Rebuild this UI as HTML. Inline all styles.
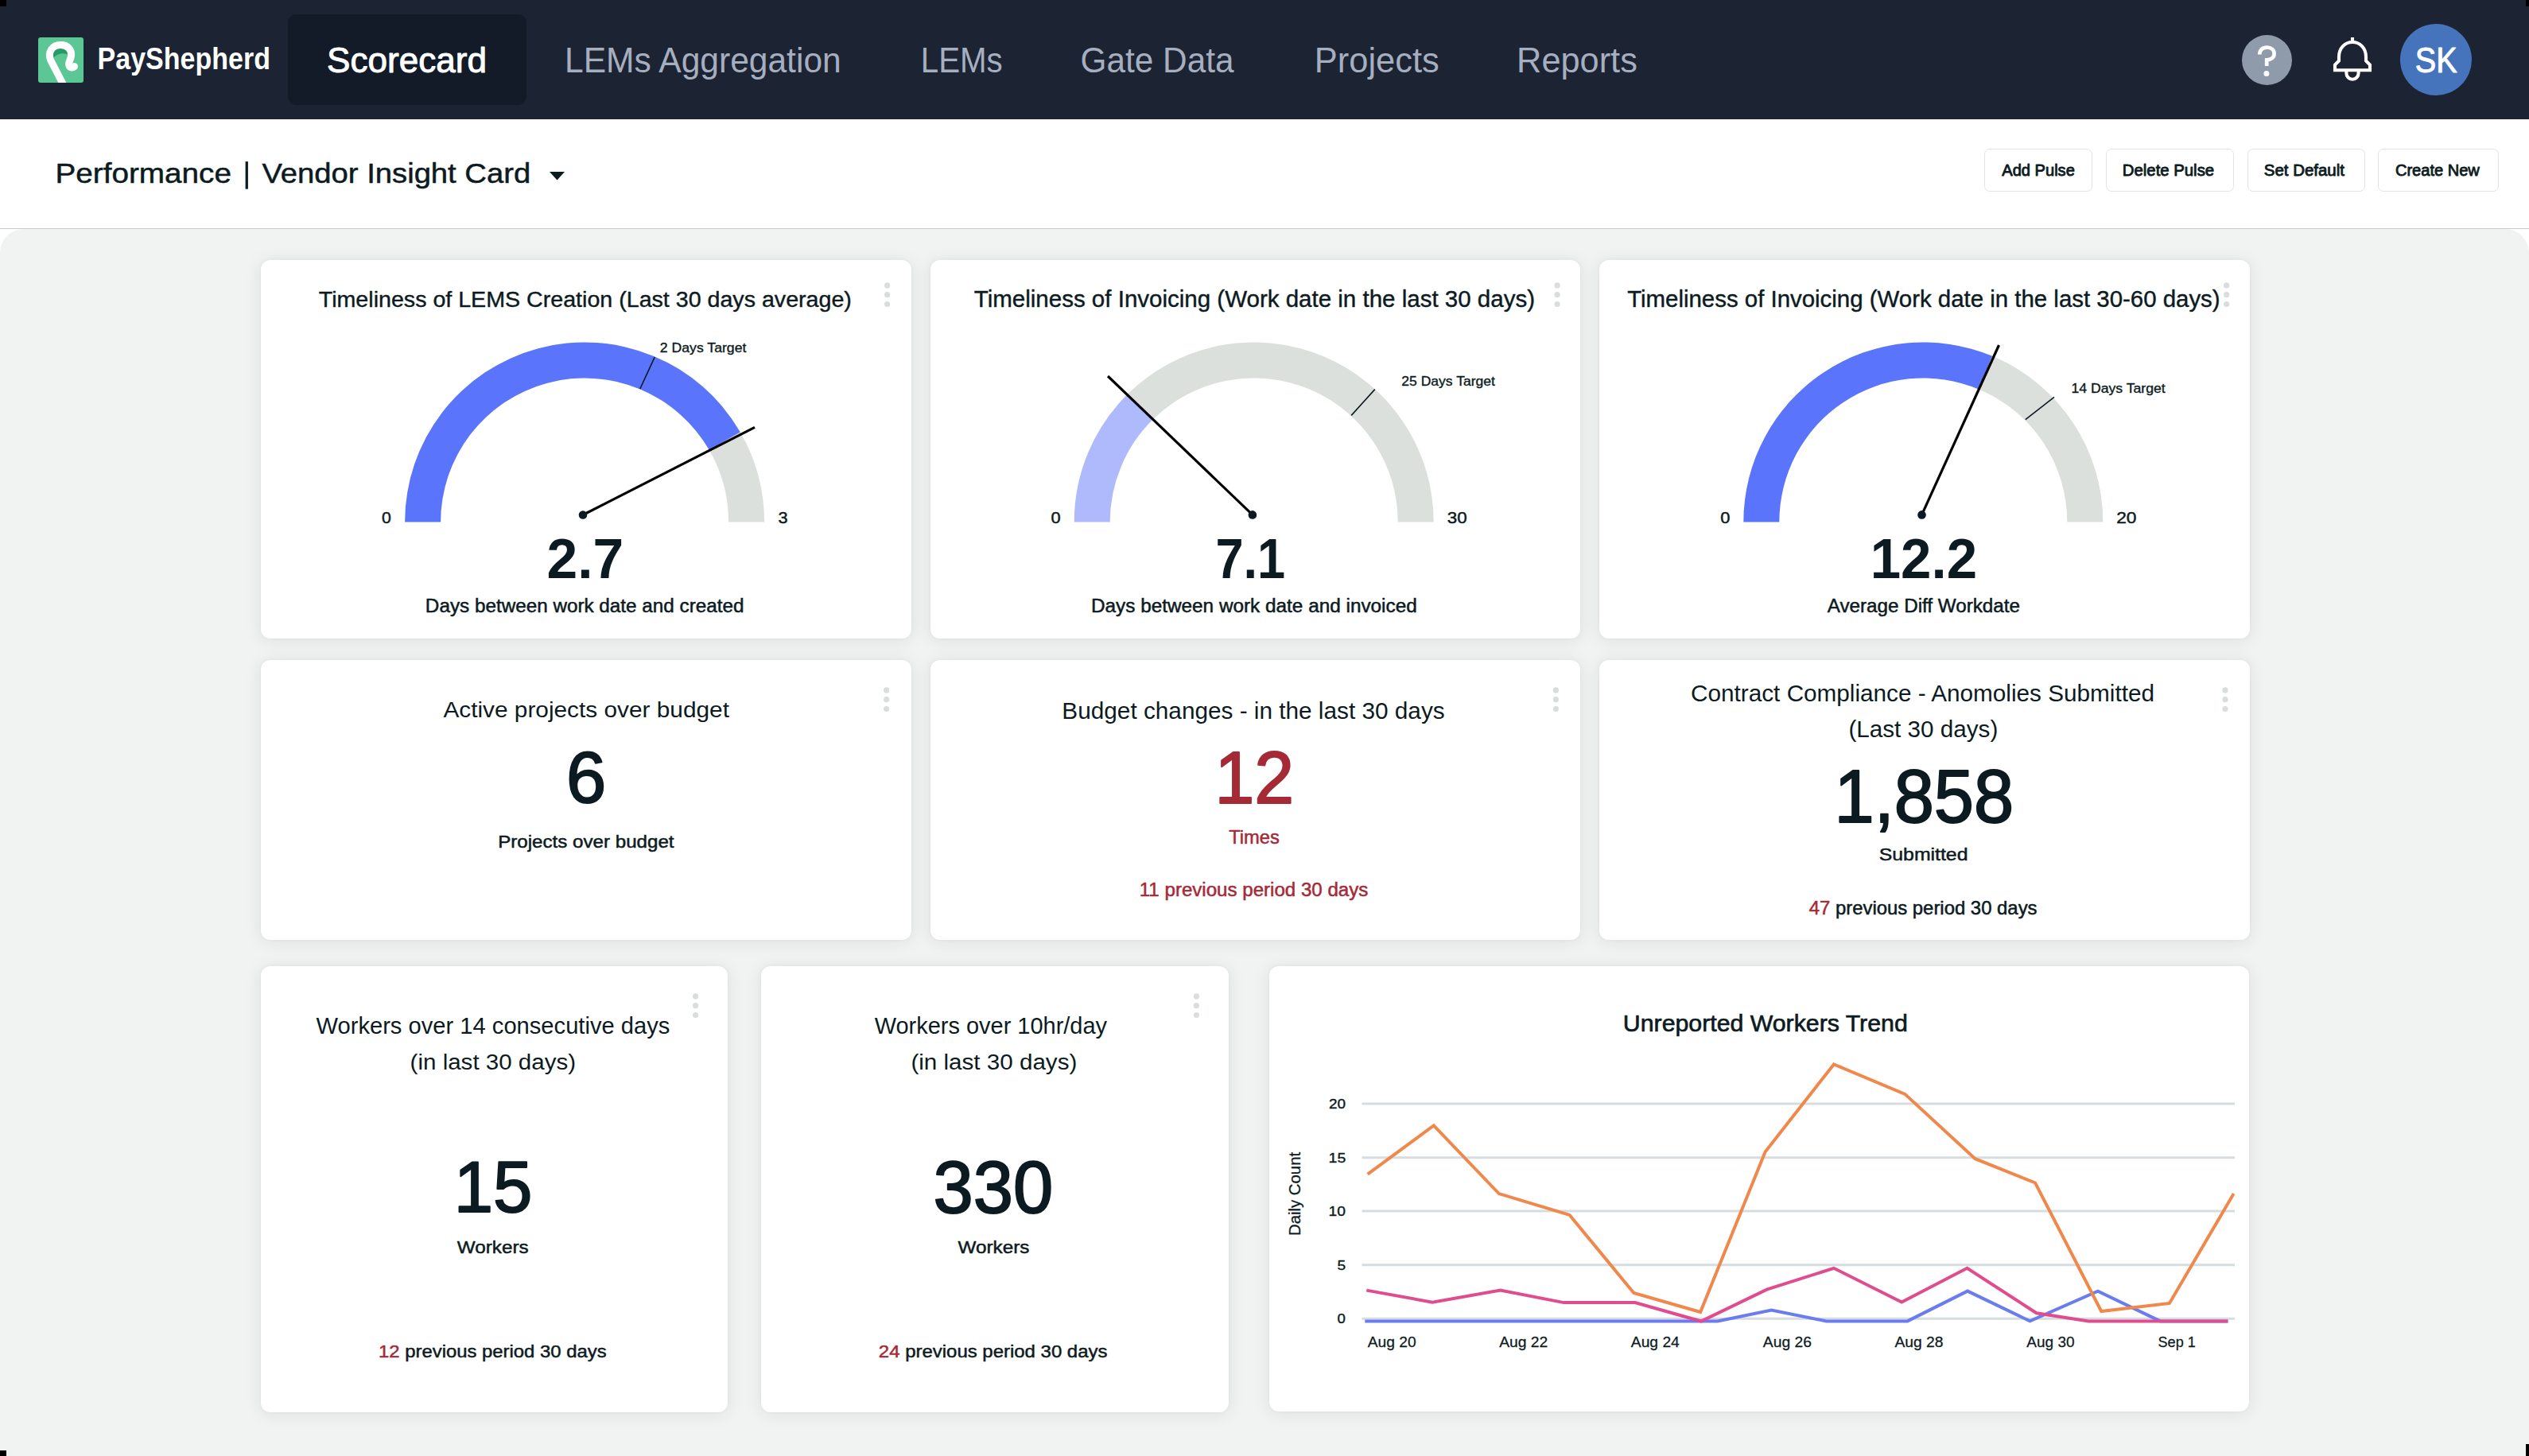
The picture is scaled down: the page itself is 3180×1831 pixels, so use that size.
<!DOCTYPE html>
<html lang="en">
<head>
<meta charset="utf-8">
<title>PayShepherd - Scorecard</title>
<style>
  html, body { margin: 0; padding: 0; }
  body { width: 3180px; height: 1831px; overflow: hidden; position: relative; background: #ffffff;
         font-family: "Liberation Sans", sans-serif; }
  .abs { position: absolute; }
  .nav { left: 0; top: 0; width: 3180px; height: 150px; background: #1c2333; }
  .tab-active { left: 362px; top: 18px; width: 300px; height: 114px; border-radius: 11px; background: #131a28; }
  .logo { left: 48px; top: 47px; width: 57px; height: 57px; border-radius: 3px; background: #5ac794; overflow: hidden; }
  .help { left: 2818.5px; top: 44px; width: 63px; height: 63px; border-radius: 50%; background: #8f9aab; }
  .avatar { left: 3018px; top: 30px; width: 90px; height: 90px; border-radius: 50%; background: #4574bd; }
  .header { left: 0; top: 150px; width: 3180px; height: 137px; background: #ffffff; }
  .hline { left: 0; top: 287px; width: 3180px; height: 1px; background: #c9cecd; }
  .main { left: 0; top: 288px; width: 3180px; height: 1543px; background: #f1f3f2; border-radius: 30px 30px 0 0; }
  .btn { top: 187px; height: 54px; box-sizing: border-box; border: 1.5px solid #e2e4e4; border-radius: 7px; background: #fff; }
  .card { background: #ffffff; border-radius: 12px; box-shadow: 0 2px 22px rgba(20, 30, 30, 0.085), 0 0 5px rgba(20,30,30,0.045); }
  .corner { background: #000; width: 8px; height: 8px; }
  svg.overlay { position: absolute; left: 0; top: 0; }
</style>
</head>
<body>
  <div class="abs main"></div>
  <div class="abs header"></div>
  <div class="abs hline"></div>
  <div class="abs nav"></div>
  <div class="abs tab-active"></div>
  <div class="abs logo">
    <svg width="57" height="57" viewBox="48 47 57 57">
      <path d="M65.5 75 C65.5 62 71.5 59.5 76.5 59.5 C82 59.5 86.5 63 86.5 69.5 C82 66 71.5 66 65.5 75 Z" fill="#289a69"/>
      <path d="M79.4 106 L63.6 75.5 C59.6 65 66 56.6 76.4 56.6 C85.6 56.6 90 63 89.6 69.5 C89.2 75 86.2 77.5 86.6 81 C87 85.2 90.6 86.2 93.6 83.6" fill="none" stroke="#ffffff" stroke-width="9" stroke-linecap="round"/>
    </svg>
  </div>
  <div class="abs help"></div>
  <div class="abs avatar"></div>

  <div class="abs btn" style="left:2495px;width:136px;"></div>
  <div class="abs btn" style="left:2648px;width:161px;"></div>
  <div class="abs btn" style="left:2825.5px;width:148px;"></div>
  <div class="abs btn" style="left:2990px;width:152px;"></div>

  <div class="abs card" style="left:328px;top:327px;width:818px;height:476px;"></div>
  <div class="abs card" style="left:1170px;top:327px;width:817px;height:476px;"></div>
  <div class="abs card" style="left:2011px;top:327px;width:818px;height:476px;"></div>
  <div class="abs card" style="left:328px;top:830px;width:818px;height:352px;"></div>
  <div class="abs card" style="left:1170px;top:830px;width:817px;height:352px;"></div>
  <div class="abs card" style="left:2011px;top:830px;width:818px;height:352px;"></div>
  <div class="abs card" style="left:327.5px;top:1215px;width:587.5px;height:561px;"></div>
  <div class="abs card" style="left:957px;top:1215px;width:588px;height:561px;"></div>
  <div class="abs card" style="left:1596px;top:1215px;width:1232px;height:560px;"></div>

  <svg class="overlay" width="3180" height="1831" viewBox="0 0 3180 1831" font-family="Liberation Sans, sans-serif">
    <!-- help icon -->
    <path d="M2841.3 68.6 C2841.3 62.6 2845.3 59.6 2850.5 59.6 C2855.7 59.6 2859.6 62.8 2859.6 67.5 C2859.6 72.5 2855.5 75.3 2850.2 75.3 L2850.2 83" fill="none" stroke="#ffffff" stroke-width="4.7" stroke-linecap="butt" stroke-linejoin="miter"/>
    <circle cx="2849.9" cy="92.4" r="3.5" fill="#ffffff"/>
    <!-- bell icon -->
    <g fill="none" stroke="#ffffff" stroke-width="4.1" stroke-linejoin="miter">
      <line x1="2958" y1="47" x2="2958" y2="53"/>
      <path d="M2941 76.5 L2941 71.5 C2941 60.5 2948.5 53 2958 53 C2967.5 53 2975 60.5 2975 71.5 L2975 76.5 L2980 81.5 L2980 88.2 L2936 88.2 L2936 81.5 Z"/>
      <path d="M2950.4 88.2 L2950.4 92.2 A7.6 7.6 0 0 0 2965.6 92.2 L2965.6 88.2"/>
    </g>
    <!-- dropdown triangle -->
    <path d="M691 216 L710 216 L700.5 226.5 Z" fill="#0c1a21"/>
    <rect x="308.6" y="203.1" width="3.3" height="34.6" fill="#0c1a21"/>
<path d="M509.10 656.50 A226.00 226.00 0 0 1 930.82 543.50 L891.85 566.00 A181.00 181.00 0 0 0 554.10 656.50 Z" fill="#5a74fc"/>
<path d="M930.82 543.50 A226.00 226.00 0 0 1 961.10 656.50 L916.10 656.50 A181.00 181.00 0 0 0 891.85 566.00 Z" fill="#dbe0dd"/>
<line x1="804.80" y1="489.00" x2="823.20" y2="449.20" stroke="#0c1a21" stroke-width="1.6"/>
<line x1="733.00" y1="647.50" x2="949.00" y2="537.40" stroke="#000" stroke-width="3.2" stroke-linecap="butt"/>
<circle cx="733.00" cy="647.50" r="5.3" fill="#0c1a21"/>
<path d="M1350.70 656.50 A226.00 226.00 0 0 1 1418.01 495.58 L1449.61 527.62 A181.00 181.00 0 0 0 1395.70 656.50 Z" fill="#afbafd"/>
<path d="M1418.01 495.58 A226.00 226.00 0 0 1 1802.70 656.50 L1757.70 656.50 A181.00 181.00 0 0 0 1449.61 527.62 Z" fill="#dbe0dd"/>
<line x1="1699.20" y1="522.40" x2="1728.80" y2="489.60" stroke="#0c1a21" stroke-width="1.6"/>
<line x1="1574.90" y1="647.40" x2="1393.00" y2="473.00" stroke="#000" stroke-width="3.2" stroke-linecap="butt"/>
<circle cx="1574.90" cy="647.40" r="5.3" fill="#0c1a21"/>
<path d="M2192.30 656.50 A226.00 226.00 0 0 1 2505.15 447.85 L2487.86 489.40 A181.00 181.00 0 0 0 2237.30 656.50 Z" fill="#5a74fc"/>
<path d="M2505.15 447.85 A226.00 226.00 0 0 1 2644.30 656.50 L2599.30 656.50 A181.00 181.00 0 0 0 2487.86 489.40 Z" fill="#dbe0dd"/>
<line x1="2546.80" y1="527.70" x2="2583.00" y2="499.40" stroke="#0c1a21" stroke-width="1.6"/>
<line x1="2416.50" y1="647.40" x2="2513.50" y2="434.00" stroke="#000" stroke-width="3.2" stroke-linecap="butt"/>
<circle cx="2416.50" cy="647.40" r="5.3" fill="#0c1a21"/>
<line x1="1712.5" y1="1388.0" x2="2810" y2="1388.0" stroke="#d6dde0" stroke-width="3"/>
<line x1="1712.5" y1="1455.8" x2="2810" y2="1455.8" stroke="#d6dde0" stroke-width="3"/>
<line x1="1712.5" y1="1523.0" x2="2810" y2="1523.0" stroke="#d6dde0" stroke-width="3"/>
<line x1="1712.5" y1="1590.8" x2="2810" y2="1590.8" stroke="#d6dde0" stroke-width="3"/>
<line x1="1712.5" y1="1658.3" x2="2810" y2="1658.3" stroke="#d6dde0" stroke-width="3"/>
<polyline fill="none" stroke="#6a7cf0" stroke-width="4" stroke-linejoin="miter" points="1716.3,1661.5 2159.7,1661.5 2227.4,1647.6 2296.6,1661.4 2398.5,1661.4 2474.0,1623.6 2552.5,1661.4 2637.9,1623.6 2716.3,1661.4 2801.4,1661.4"/>
<polyline fill="none" stroke="#e04c8e" stroke-width="4" stroke-linejoin="miter" points="1718.3,1622.6 1801.1,1637.6 1886.5,1622.6 1966.4,1638.1 2055.9,1638.1 2139.0,1661.5 2221.6,1621.6 2305.9,1594.8 2391.2,1637.5 2473.5,1594.8 2560.6,1651.3 2626.3,1661.4 2719.0,1661.4 2801.4,1661.4"/>
<polyline fill="none" stroke="#f0884c" stroke-width="4" stroke-linejoin="miter" points="1719.7,1476.6 1802.8,1415.4 1884.8,1501.1 1973.6,1527.9 2054.4,1626.0 2138.1,1650.0 2219.6,1448.6 2305.9,1338.4 2395.3,1375.9 2483.6,1457.2 2559.1,1487.5 2642.2,1649.0 2727.9,1638.9 2808.7,1501.0"/>
<circle cx="1115.6" cy="358.9" r="3.6" fill="#dadddd"/>
<circle cx="1115.6" cy="370.7" r="3.6" fill="#dadddd"/>
<circle cx="1115.6" cy="382.5" r="3.6" fill="#dadddd"/>
<circle cx="1958.1" cy="358.9" r="3.6" fill="#dadddd"/>
<circle cx="1958.1" cy="370.7" r="3.6" fill="#dadddd"/>
<circle cx="1958.1" cy="382.5" r="3.6" fill="#dadddd"/>
<circle cx="2799.6" cy="358.9" r="3.6" fill="#dadddd"/>
<circle cx="2799.6" cy="370.7" r="3.6" fill="#dadddd"/>
<circle cx="2799.6" cy="382.5" r="3.6" fill="#dadddd"/>
<circle cx="1114.6" cy="867.9" r="3.6" fill="#dadddd"/>
<circle cx="1114.6" cy="879.7" r="3.6" fill="#dadddd"/>
<circle cx="1114.6" cy="891.5" r="3.6" fill="#dadddd"/>
<circle cx="1956.4" cy="867.9" r="3.6" fill="#dadddd"/>
<circle cx="1956.4" cy="879.7" r="3.6" fill="#dadddd"/>
<circle cx="1956.4" cy="891.5" r="3.6" fill="#dadddd"/>
<circle cx="2798.0" cy="867.9" r="3.6" fill="#dadddd"/>
<circle cx="2798.0" cy="879.7" r="3.6" fill="#dadddd"/>
<circle cx="2798.0" cy="891.5" r="3.6" fill="#dadddd"/>
<circle cx="874.6" cy="1252.9" r="3.6" fill="#dadddd"/>
<circle cx="874.6" cy="1264.7" r="3.6" fill="#dadddd"/>
<circle cx="874.6" cy="1276.5" r="3.6" fill="#dadddd"/>
<circle cx="1504.4" cy="1252.9" r="3.6" fill="#dadddd"/>
<circle cx="1504.4" cy="1264.7" r="3.6" fill="#dadddd"/>
<circle cx="1504.4" cy="1276.5" r="3.6" fill="#dadddd"/>
<text transform="translate(122.57 87.30) scale(0.8635 1)" font-size="39.40" font-weight="700" fill="#ffffff">PayShepherd</text>
<text transform="translate(411.11 91.10) scale(1.0056 1)" font-size="43.83" font-weight="400" fill="#ffffff" stroke="#ffffff" stroke-width="0.96" stroke-linejoin="round">Scorecard</text>
<text transform="translate(710.08 90.90) scale(0.9652 1)" font-size="44.09" font-weight="400" fill="#a6afbf">LEMs Aggregation</text>
<text transform="translate(1157.75 90.90) scale(0.9140 1)" font-size="44.09" font-weight="400" fill="#a6afbf">LEMs</text>
<text transform="translate(1358.62 90.90) scale(0.9600 1)" font-size="44.09" font-weight="400" fill="#a6afbf">Gate Data</text>
<text transform="translate(1652.81 90.90) scale(0.9855 1)" font-size="44.09" font-weight="400" fill="#a6afbf">Projects</text>
<text transform="translate(1907.11 90.90) scale(0.9829 1)" font-size="44.09" font-weight="400" fill="#a6afbf">Reports</text>
<text transform="translate(3036.70 91.10) scale(0.8978 1)" font-size="44.25" font-weight="400" fill="#ffffff" stroke="#ffffff" stroke-width="0.97" stroke-linejoin="round">SK</text>
<text transform="translate(69.55 229.70) scale(1.0944 1)" font-size="35.35" font-weight="400" fill="#0c1a21" stroke="#0c1a21" stroke-width="0.49" stroke-linejoin="round">Performance</text>
<text transform="translate(329.47 229.70) scale(1.0813 1)" font-size="35.35" font-weight="400" fill="#0c1a21" stroke="#0c1a21" stroke-width="0.49" stroke-linejoin="round">Vendor Insight Card</text>
<text transform="translate(2517.22 220.70) scale(0.9839 1)" font-size="20.44" font-weight="400" fill="#0c1a21" stroke="#0c1a21" stroke-width="0.86" stroke-linejoin="round">Add Pulse</text>
<text transform="translate(2668.84 220.70) scale(0.9955 1)" font-size="20.44" font-weight="400" fill="#0c1a21" stroke="#0c1a21" stroke-width="0.86" stroke-linejoin="round">Delete Pulse</text>
<text transform="translate(2846.79 220.70) scale(1.0000 1)" font-size="20.44" font-weight="400" fill="#0c1a21" stroke="#0c1a21" stroke-width="0.86" stroke-linejoin="round">Set Default</text>
<text transform="translate(3011.88 220.70) scale(0.9828 1)" font-size="20.44" font-weight="400" fill="#0c1a21" stroke="#0c1a21" stroke-width="0.86" stroke-linejoin="round">Create New</text>
<text transform="translate(400.75 385.50) scale(1.0218 1)" font-size="28.02" font-weight="400" fill="#0c1a21" stroke="#0c1a21" stroke-width="0.39" stroke-linejoin="round">Timeliness of LEMS Creation (Last 30 days average)</text>
<text transform="translate(829.87 443.00) scale(1.1055 1)" font-size="15.96" font-weight="400" fill="#0c1a21" stroke="#0c1a21" stroke-width="0.35" stroke-linejoin="round">2 Days Target</text>
<text transform="translate(480.07 658.40) scale(1.0057 1)" font-size="21.14" font-weight="400" fill="#0c1a21" stroke="#0c1a21" stroke-width="0.47" stroke-linejoin="round">0</text>
<text transform="translate(978.56 658.40) scale(1.0273 1)" font-size="21.14" font-weight="400" fill="#0c1a21" stroke="#0c1a21" stroke-width="0.47" stroke-linejoin="round">3</text>
<text transform="translate(687.53 727.20) scale(0.9920 1)" font-size="70.12" font-weight="700" fill="#0c1a21">2.7</text>
<text transform="translate(534.87 770.20) scale(1.0377 1)" font-size="23.39" font-weight="400" fill="#0c1a21" stroke="#0c1a21" stroke-width="0.51" stroke-linejoin="round">Days between work date and created</text>
<text transform="translate(1224.75 385.70) scale(1.0326 1)" font-size="28.59" font-weight="400" fill="#0c1a21" stroke="#0c1a21" stroke-width="0.40" stroke-linejoin="round">Timeliness of Invoicing (Work date in the last 30 days)</text>
<text transform="translate(1762.37 485.20) scale(1.0970 1)" font-size="15.96" font-weight="400" fill="#0c1a21" stroke="#0c1a21" stroke-width="0.35" stroke-linejoin="round">25 Days Target</text>
<text transform="translate(1321.56 658.40) scale(1.0328 1)" font-size="21.14" font-weight="400" fill="#0c1a21" stroke="#0c1a21" stroke-width="0.47" stroke-linejoin="round">0</text>
<text transform="translate(1819.85 658.40) scale(1.0571 1)" font-size="21.14" font-weight="400" fill="#0c1a21" stroke="#0c1a21" stroke-width="0.47" stroke-linejoin="round">30</text>
<text transform="translate(1528.43 727.20) scale(0.9002 1)" font-size="70.12" font-weight="700" fill="#0c1a21">7.1</text>
<text transform="translate(1371.97 770.20) scale(1.0405 1)" font-size="23.39" font-weight="400" fill="#0c1a21" stroke="#0c1a21" stroke-width="0.51" stroke-linejoin="round">Days between work date and invoiced</text>
<text transform="translate(2046.15 385.70) scale(1.0291 1)" font-size="28.59" font-weight="400" fill="#0c1a21" stroke="#0c1a21" stroke-width="0.40" stroke-linejoin="round">Timeliness of Invoicing (Work date in the last 30-60 days)</text>
<text transform="translate(2604.39 494.40) scale(1.1061 1)" font-size="15.96" font-weight="400" fill="#0c1a21" stroke="#0c1a21" stroke-width="0.35" stroke-linejoin="round">14 Days Target</text>
<text transform="translate(2163.36 658.40) scale(1.0328 1)" font-size="21.14" font-weight="400" fill="#0c1a21" stroke="#0c1a21" stroke-width="0.47" stroke-linejoin="round">0</text>
<text transform="translate(2661.18 658.40) scale(1.0771 1)" font-size="21.14" font-weight="400" fill="#0c1a21" stroke="#0c1a21" stroke-width="0.47" stroke-linejoin="round">20</text>
<text transform="translate(2351.69 727.20) scale(0.9844 1)" font-size="70.12" font-weight="700" fill="#0c1a21">12.2</text>
<text transform="translate(2297.77 770.20) scale(1.0353 1)" font-size="23.39" font-weight="400" fill="#0c1a21" stroke="#0c1a21" stroke-width="0.51" stroke-linejoin="round">Average Diff Workdate</text>
<text transform="translate(557.40 902.40) scale(1.0753 1)" font-size="27.73" font-weight="400" fill="#0c1a21">Active projects over budget</text>
<text transform="translate(711.96 1008.70) scale(0.9887 1)" font-size="91.30" font-weight="400" fill="#0c1a21" stroke="#0c1a21" stroke-width="2.01" stroke-linejoin="round">6</text>
<text transform="translate(626.18 1066.40) scale(1.0919 1)" font-size="22.12" font-weight="400" fill="#0c1a21" stroke="#0c1a21" stroke-width="0.49" stroke-linejoin="round">Projects over budget</text>
<text transform="translate(1335.37 903.60) scale(1.0160 1)" font-size="29.30" font-weight="400" fill="#0c1a21">Budget changes - in the last 30 days</text>
<text transform="translate(1527.39 1009.90) scale(0.9636 1)" font-size="92.98" font-weight="400" fill="#a52a36" stroke="#a52a36" stroke-width="2.05" stroke-linejoin="round">12</text>
<text transform="translate(1545.19 1060.70) scale(1.0204 1)" font-size="23.25" font-weight="400" fill="#a52a36" stroke="#a52a36" stroke-width="0.51" stroke-linejoin="round">Times</text>
<text transform="translate(1432.76 1127.20) scale(1.0372 1)" font-size="23.25" font-weight="400" fill="#a52a36" stroke="#a52a36" stroke-width="0.51" stroke-linejoin="round">11 previous period 30 days</text>
<text transform="translate(2126.11 881.60) scale(1.0240 1)" font-size="29.01" font-weight="400" fill="#0c1a21">Contract Compliance - Anomolies Submitted</text>
<text transform="translate(2324.41 926.50) scale(1.0222 1)" font-size="29.01" font-weight="400" fill="#0c1a21">(Last 30 days)</text>
<text transform="translate(2306.56 1034.00) scale(0.9552 1)" font-size="94.38" font-weight="400" fill="#0c1a21" stroke="#0c1a21" stroke-width="2.08" stroke-linejoin="round">1,858</text>
<text transform="translate(2362.70 1082.20) scale(1.1155 1)" font-size="22.27" font-weight="400" fill="#0c1a21" stroke="#0c1a21" stroke-width="0.49" stroke-linejoin="round">Submitted</text>
<text transform="translate(2274.69 1150.30) scale(1.0037 1)" font-size="23.81" font-weight="400" fill="#0c1a21" stroke-width="0.52" stroke-linejoin="round"><tspan fill="#a52a36" stroke="#a52a36">47</tspan><tspan fill="#0c1a21" stroke="#0c1a21"> previous period 30 days</tspan></text>
<text transform="translate(397.50 1299.80) scale(1.0097 1)" font-size="28.87" font-weight="400" fill="#0c1a21">Workers over 14 consecutive days</text>
<text transform="translate(515.62 1344.50) scale(1.0385 1)" font-size="28.44" font-weight="400" fill="#0c1a21">(in last 30 days)</text>
<text transform="translate(570.63 1523.80) scale(0.9688 1)" font-size="91.58" font-weight="400" fill="#0c1a21" stroke="#0c1a21" stroke-width="2.01" stroke-linejoin="round">15</text>
<text transform="translate(574.77 1575.60) scale(1.1258 1)" font-size="21.56" font-weight="400" fill="#0c1a21" stroke="#0c1a21" stroke-width="0.47" stroke-linejoin="round">Workers</text>
<text transform="translate(476.07 1707.30) scale(1.1072 1)" font-size="21.56" font-weight="400" fill="#0c1a21" stroke-width="0.47" stroke-linejoin="round"><tspan fill="#a52a36" stroke="#a52a36">12</tspan><tspan fill="#0c1a21" stroke="#0c1a21"> previous period 30 days</tspan></text>
<text transform="translate(1099.70 1299.80) scale(1.0034 1)" font-size="28.87" font-weight="400" fill="#0c1a21">Workers over 10hr/day</text>
<text transform="translate(1145.41 1344.50) scale(1.0411 1)" font-size="28.44" font-weight="400" fill="#0c1a21">(in last 30 days)</text>
<text transform="translate(1173.57 1524.80) scale(0.9707 1)" font-size="92.98" font-weight="400" fill="#0c1a21" stroke="#0c1a21" stroke-width="2.05" stroke-linejoin="round">330</text>
<text transform="translate(1204.57 1575.60) scale(1.1258 1)" font-size="21.56" font-weight="400" fill="#0c1a21" stroke="#0c1a21" stroke-width="0.47" stroke-linejoin="round">Workers</text>
<text transform="translate(1104.84 1707.30) scale(1.1116 1)" font-size="21.56" font-weight="400" fill="#0c1a21" stroke-width="0.47" stroke-linejoin="round"><tspan fill="#a52a36" stroke="#a52a36">24</tspan><tspan fill="#0c1a21" stroke="#0c1a21"> previous period 30 days</tspan></text>
<text transform="translate(2040.84 1297.20) scale(1.0060 1)" font-size="30.11" font-weight="400" fill="#0c1a21" stroke="#0c1a21" stroke-width="0.66" stroke-linejoin="round">Unreported Workers Trend</text>
<text transform="translate(1670.92 1394.10) scale(1.1073 1)" font-size="17.08" font-weight="400" fill="#0c1a21" stroke="#0c1a21" stroke-width="0.38" stroke-linejoin="round">20</text>
<text transform="translate(1670.60 1461.90) scale(1.1409 1)" font-size="17.08" font-weight="400" fill="#0c1a21" stroke="#0c1a21" stroke-width="0.38" stroke-linejoin="round">15</text>
<text transform="translate(1670.61 1529.10) scale(1.1238 1)" font-size="17.08" font-weight="400" fill="#0c1a21" stroke="#0c1a21" stroke-width="0.38" stroke-linejoin="round">10</text>
<text transform="translate(1681.61 1596.90) scale(1.1213 1)" font-size="17.08" font-weight="400" fill="#0c1a21" stroke="#0c1a21" stroke-width="0.38" stroke-linejoin="round">5</text>
<text transform="translate(1681.62 1664.40) scale(1.0877 1)" font-size="17.08" font-weight="400" fill="#0c1a21" stroke="#0c1a21" stroke-width="0.38" stroke-linejoin="round">0</text>
<text transform="translate(1719.83 1694.40) scale(1.0018 1)" font-size="19.15" font-weight="400" fill="#0c1a21" stroke="#0c1a21" stroke-width="0.27" stroke-linejoin="round">Aug 20</text>
<text transform="translate(1885.13 1694.40) scale(1.0068 1)" font-size="19.15" font-weight="400" fill="#0c1a21" stroke="#0c1a21" stroke-width="0.27" stroke-linejoin="round">Aug 22</text>
<text transform="translate(2050.83 1694.40) scale(1.0051 1)" font-size="19.15" font-weight="400" fill="#0c1a21" stroke="#0c1a21" stroke-width="0.27" stroke-linejoin="round">Aug 24</text>
<text transform="translate(2216.83 1694.40) scale(1.0068 1)" font-size="19.15" font-weight="400" fill="#0c1a21" stroke="#0c1a21" stroke-width="0.27" stroke-linejoin="round">Aug 26</text>
<text transform="translate(2382.43 1694.40) scale(1.0068 1)" font-size="19.15" font-weight="400" fill="#0c1a21" stroke="#0c1a21" stroke-width="0.27" stroke-linejoin="round">Aug 28</text>
<text transform="translate(2548.33 1694.40) scale(0.9919 1)" font-size="19.15" font-weight="400" fill="#0c1a21" stroke="#0c1a21" stroke-width="0.27" stroke-linejoin="round">Aug 30</text>
<text transform="translate(2713.56 1694.40) scale(0.9440 1)" font-size="19.15" font-weight="400" fill="#0c1a21" stroke="#0c1a21" stroke-width="0.27" stroke-linejoin="round">Sep 1</text>
<text transform="translate(1634.5 1553.95) rotate(-90) scale(1.0317 1)" font-size="19.71" fill="#0c1a21" stroke="#0c1a21" stroke-width="0.28">Daily Count</text>
  </svg>

  <div class="abs corner" style="left:0;top:0;"></div>
  <div class="abs corner" style="left:3176px;top:0;width:4px;"></div>
  <div class="abs corner" style="left:3176px;top:1816px;width:4px;height:15px;"></div>
  <div class="abs corner" style="left:0;top:1824px;height:7px;"></div>
</body>
</html>
